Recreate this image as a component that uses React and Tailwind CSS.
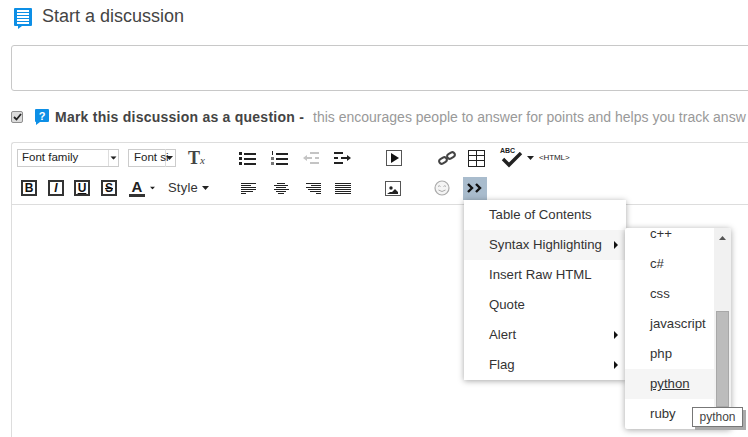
import React from 'react';

const Caret = ({ className = '' }) => (
  <svg width="7" height="4" viewBox="0 0 7 4" className={className}><path d="M0 0h7L3.5 4z" fill="#222" /></svg>
);

const Lines = ({ rows }) => (
  <svg width="17" height="16" viewBox="0 0 17 16" shapeRendering="crispEdges">
    {rows.map(([x, y, w, c], i) => <rect key={i} x={x} y={y} width={w} height="1" fill={c || '#222'} />)}
  </svg>
);

const BulletList = () => (
  <svg width="17" height="14" viewBox="0 0 17 14" shapeRendering="crispEdges" fill="#222">
    <rect x="0" y="1" width="3" height="3" /><rect x="0" y="6" width="3" height="3" /><rect x="0" y="11" width="3" height="3" />
    <rect x="5" y="2" width="12" height="2" /><rect x="5" y="7" width="12" height="2" /><rect x="5" y="12" width="12" height="2" />
  </svg>
);

const NumberList = () => (
  <svg width="17" height="15" viewBox="0 0 17 15" shapeRendering="crispEdges" fill="#222">
    <rect x="1" y="0" width="1" height="4" /><rect x="0" y="6" width="3" height="3" fill="#777" /><rect x="0" y="11" width="3" height="3" fill="#777" />
    <rect x="5" y="2" width="12" height="2" /><rect x="5" y="7" width="12" height="2" /><rect x="5" y="12" width="12" height="2" />
  </svg>
);

const Outdent = () => (
  <svg width="17" height="13" viewBox="0 0 17 13" shapeRendering="crispEdges" fill="#c4c4c4">
    <rect x="7" y="0" width="9" height="2" /><rect x="3" y="5" width="6" height="2" /><rect x="12" y="5" width="4" height="2" /><rect x="7" y="10" width="9" height="2" />
    <path d="M4 3v6L0 6z" shapeRendering="auto" />
  </svg>
);

const Indent = () => (
  <svg width="17" height="13" viewBox="0 0 17 13" shapeRendering="crispEdges" fill="#222">
    <rect x="0" y="0" width="9" height="2" /><rect x="0" y="5" width="4" height="2" /><rect x="7" y="5" width="6" height="2" /><rect x="0" y="10" width="9" height="2" />
    <path d="M13 3v6l4-3z" shapeRendering="auto" />
  </svg>
);

const Boxed = ({ children, className = '' }) => (
  <span className={`flex h-[16px] w-[16px] items-center justify-center border-2 border-[#333] bg-white font-['Liberation_Sans',sans-serif] text-[12px] leading-none font-bold text-[#111] ${className}`}>
    {children}
  </span>
);

function MenuRow({ label, arrow, active }) {
  return (
    <div className={`flex h-[30px] items-center justify-between pr-[8px] pb-[1px] pl-[25px] ${active ? 'bg-[#f5f5f5]' : ''}`}>
      <span>{label}</span>
      {arrow && <svg width="4" height="8" viewBox="0 0 4 8"><path d="M0 0l4 4-4 4z" fill="#111" /></svg>}
    </div>
  );
}

function SubMenu() {
  const langs = ['c++', 'c#', 'css', 'javascript', 'php', 'python', 'ruby'];
  return (
    <div className="absolute top-[228px] left-[625px] z-20 flex h-[201px] w-[106px] overflow-hidden rounded-[2px] bg-white text-[13.2px] shadow-[0_1px_6px_rgba(0,0,0,0.35)]">
      <div className="w-[89px] shrink-0 overflow-hidden">
        <div className="-mt-[9px]">
          {langs.map((l) => (
            <div key={l} className={`flex h-[30px] items-center pl-[25px] ${l === 'python' ? 'bg-[#f5f5f5] underline' : ''}`}>{l}</div>
          ))}
        </div>
      </div>
      <div className="relative flex w-[17px] flex-col items-center bg-[#f1f1f1]">
        <svg width="7" height="4" viewBox="0 0 7 4" className="mt-[8px]"><path d="M0 4h7L3.5 0z" fill="#555" /></svg>
        <div className="mt-[71px] h-[96px] w-[13px] border border-[#a8a8a8] bg-[#bcbcbc]" />
      </div>
    </div>
  );
}

export default function App() {
  return (
    <div className="relative h-[437px] w-[748px] overflow-hidden bg-white font-['Liberation_Sans',Arial,sans-serif] text-[14px] text-[#333]">
      {/* Heading */}
      <div className="flex h-[45px] items-start pt-[8px] pl-[14px]">
        <svg width="18" height="21" viewBox="0 0 18 21" shapeRendering="crispEdges">
          <path d="M1 0h16a1 1 0 0 1 1 1v16a1 1 0 0 1-1 1H8l-4 3v-3H1a1 1 0 0 1-1-1V1a1 1 0 0 1 1-1z" fill="#0d8fe6" shapeRendering="auto" />
          <rect x="3" y="2" width="12" height="14" fill="#fff" />
          <rect x="3" y="4" width="12" height="1" fill="#0d8fe6" /><rect x="3" y="7" width="12" height="1" fill="#0d8fe6" />
          <rect x="3" y="10" width="12" height="1" fill="#0d8fe6" /><rect x="3" y="13" width="12" height="1" fill="#0d8fe6" />
        </svg>
        <h2 className="ml-[10px] -mt-[2px] text-[18px] leading-[20px] font-normal text-[#444]">Start a discussion</h2>
      </div>

      {/* Title input */}
      <div className="ml-[11px] h-[46px] w-[760px] rounded-[3px] border border-[#c8c8c8]" />

      {/* Question checkbox */}
      <div className="mt-[18px] flex h-[16px] items-center whitespace-nowrap">
        <span className="ml-[11px] flex h-[12px] w-[12px] items-center justify-center rounded-[2px] border border-[#8f8f8f] bg-[#dcdcdc]">
          <svg width="9" height="8" viewBox="0 0 9 8"><path d="M1 4l2.5 2.5L8 1" fill="none" stroke="#222" strokeWidth="1.8" /></svg>
        </span>
        <svg width="14" height="16" viewBox="0 0 14 16" className="ml-[12px]">
          <path d="M1 0h12a1 1 0 0 1 1 1v11a1 1 0 0 1-1 1H5l-4 3v-3a1 1 0 0 1-1-1V1a1 1 0 0 1 1-1z" fill="#0d8fe6" />
          <text x="7" y="10.5" textAnchor="middle" fontSize="11" fontWeight="700" fill="#fff" fontFamily="Liberation Sans, sans-serif">?</text>
        </svg>
        <span className="ml-[6px] font-bold tracking-[0.24px] text-[#444]">Mark this discussion as a question -</span>
        <span className="ml-[9px] text-[#999]">this encourages people to answer for points and helps you track answ</span>
      </div>

      {/* Editor */}
      <div className="mt-[17px] ml-[11px] h-[300px] w-[760px] rounded-tl-[3px] border-t border-l border-[#ddd]">
        <div className="h-[62px] border-b border-[#ddd] text-[#222]">
          {/* first row */}
          <div className="flex h-[30px] items-center">
            <div className="ml-[5px] flex h-[18px] w-[102px] items-center justify-between border border-[#ccc] pl-[4px] text-[11.5px]">
              <span>Font family</span>
              <span className="flex h-full w-[10px] items-center justify-center border-l border-[#ddd]"><Caret className="scale-90" /></span>
            </div>
            <div className="ml-[9px] flex h-[18px] w-[48px] items-center justify-between border border-[#ccc] pr-[2px] pl-[5px] text-[11.5px]">
              <span className="w-[32px] whitespace-nowrap border-r border-[#ddd]">Font si</span><Caret />
            </div>
            <span className="ml-[12px] w-[16px] font-['Liberation_Serif',serif] text-[18px] leading-none font-bold text-[#444]">T<i className="text-[11px] font-normal">x</i></span>
            <div className="ml-[35px] flex w-[17px]"><BulletList /></div>
            <div className="ml-[15px] flex w-[17px]"><NumberList /></div>
            <div className="ml-[15px] flex w-[17px]"><Outdent /></div>
            <div className="ml-[14px] flex w-[17px]"><Indent /></div>
            <span className="ml-[35px] flex h-[16px] w-[16px] items-center justify-center border border-[#555]">
              <svg width="9" height="10" viewBox="0 0 9 10"><path d="M1 0l8 5-8 5z" fill="#111" /></svg>
            </span>
            <svg width="18" height="14" viewBox="0 0 18 14" className="ml-[36px]" fill="none" stroke="#444" strokeWidth="2">
              <rect x="1" y="7" width="8" height="5" rx="2.5" transform="rotate(-32 5 9.5)" />
              <rect x="9" y="2" width="8" height="5" rx="2.5" transform="rotate(-32 13 4.5)" />
            </svg>
            <svg width="17" height="17" viewBox="0 0 17 17" className="ml-[12px]" shapeRendering="crispEdges" fill="#222">
              <rect x="0" y="0" width="17" height="1" /><rect x="0" y="5" width="17" height="1" /><rect x="0" y="10" width="17" height="1" /><rect x="0" y="16" width="17" height="1" />
              <rect x="0" y="0" width="1" height="17" /><rect x="8" y="0" width="1" height="17" /><rect x="16" y="0" width="1" height="17" />
            </svg>
            <span className="relative ml-[15px] h-[18px] w-[22px]">
              <span className="absolute top-[-3px] left-0 text-[7px] leading-[10px] font-bold">ABC</span>
              <svg width="22" height="16" viewBox="0 0 22 16" className="absolute top-[3px] left-[1px]"><path d="M2 7l6 6L20 1" fill="none" stroke="#222" strokeWidth="3.4" /></svg>
            </span>
            <Caret className="ml-[5px]" />
            <span className="ml-[5px] text-[8px] leading-none tracking-[-0.1px]">&lt;HTML&gt;</span>
          </div>
          {/* second row */}
          <div className="flex h-[30px] items-center">
            <Boxed className="ml-[9px]">B</Boxed>
            <Boxed className="ml-[11px] italic">I</Boxed>
            <Boxed className="ml-[10px] underline">U</Boxed>
            <Boxed className="ml-[11px] line-through">S</Boxed>
            <span className="ml-[12px] flex w-[16px] flex-col items-center text-[15px] leading-[13px] font-bold text-[#222]">A<span className="mt-[1px] block h-[3px] w-[16px] bg-[#333]" /></span>
            <Caret className="ml-[4px] scale-75" />
            <span className="ml-[12px] text-[13px] tracking-[0.2px] text-[#333]">Style</span>
            <Caret className="ml-[4px]" />
            <div className="ml-[32px] flex w-[17px]"><Lines rows={[[0, 3, 15], [0, 5, 10], [0, 7, 15], [0, 9, 15], [0, 11, 12], [0, 13, 5]]} /></div>
            <div className="ml-[15px] flex w-[17px]"><Lines rows={[[4, 3, 8], [1, 5, 14], [3, 7, 10], [1, 9, 15], [3, 11, 10], [5, 13, 6]]} /></div>
            <div className="ml-[15px] flex w-[17px]"><Lines rows={[[1, 3, 15], [6, 5, 10], [1, 7, 15], [3, 9, 13], [5, 11, 11], [11, 13, 5]]} /></div>
            <div className="ml-[13px] flex w-[17px]"><Lines rows={[[0, 3, 16], [0, 5, 16], [0, 7, 16], [0, 9, 16], [0, 11, 16], [0, 13, 16]]} /></div>
            <span className="ml-[33px] flex h-[15px] w-[16px] items-end justify-center border border-[#555]">
              <svg width="12" height="10" viewBox="0 0 12 10"><circle cx="4" cy="3" r="1.7" fill="#222" /><path d="M0 9l3-2 2 0 3-3 3 3v2z" fill="#222" /></svg>
            </span>
            <svg width="16" height="16" viewBox="0 0 16 16" className="ml-[33px]" fill="none" stroke="#aaa">
              <circle cx="8" cy="8" r="7" fill="#f4f4f4" strokeWidth="1.2" />
              <path d="M4 6.5q1.3-1.5 2.5 0M9.5 6.5q1.3-1.5 2.5 0M4.5 10q3.5 3 7 0" />
            </svg>
            <span className="ml-[13px] flex h-[23px] w-[24px] items-center justify-center bg-[#a9bccd]">
              <svg width="16" height="10" viewBox="0 0 16 10" fill="none" stroke="#111" strokeWidth="2.4"><path d="M1 1l4 4-4 4M9 1l4 4-4 4" /></svg>
            </span>
          </div>
        </div>
      </div>

      {/* Insert menu */}
      <div className="absolute top-[200px] left-[464px] z-10 w-[162px] bg-white text-[13.2px] shadow-[0_1px_6px_rgba(0,0,0,0.35)]">
        <MenuRow label="Table of Contents" />
        <MenuRow label="Syntax Highlighting" arrow active />
        <MenuRow label="Insert Raw HTML" />
        <MenuRow label="Quote" />
        <MenuRow label="Alert" arrow />
        <MenuRow label="Flag" arrow />
      </div>
      <SubMenu />

      {/* Tooltip */}
      <div className="absolute top-[407px] left-[692px] z-30 flex h-[20px] w-[51px] items-center justify-center border border-[#777] bg-white text-[12px] leading-none text-[#444] shadow-[3px_3px_0_#aaa]">python</div>
    </div>
  );
}
